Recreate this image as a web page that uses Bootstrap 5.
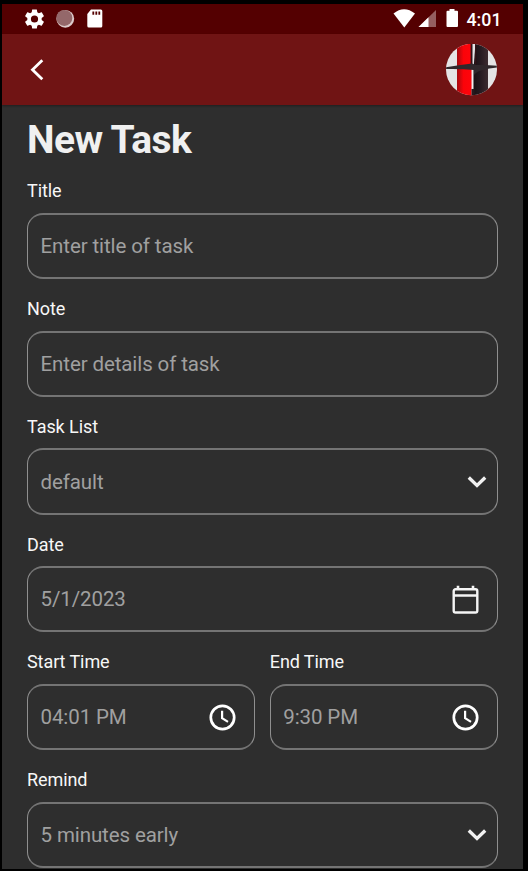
<!DOCTYPE html>
<html lang="en">
<head>
<meta charset="utf-8">
<meta name="viewport" content="width=device-width, initial-scale=1">
<title>New Task</title>
<link href="https://cdn.jsdelivr.net/npm/bootstrap@5.3.0/dist/css/bootstrap.min.css" rel="stylesheet">
<style>
html, body { height: 100%; }
body { background: #000; font-family: Roboto, sans-serif; color: #f2f2f2; padding: 4px 5px 2px 2px; overflow: hidden; }
svg { display: block; flex: none; }
.screen { background: #2e2e2e; }
.status { height: 30px; background: #540001; padding: 0 21.5px 0 23px; }
.clock { font-size: 17.8px; font-weight: 500; line-height: 30px; color: #fff; padding-top: 2px; margin-left: 5.5px; }
.topbar { height: 71px; background: #701414; padding: 0 26px 0 22px; box-shadow: 0 1px 2px rgba(0,0,0,.35); }
.content { padding: 12px 25.5px 0 25px; }
.heading { font-size: 39px; font-weight: 700; line-height: 46px; letter-spacing: -.6px; margin: 0 0 13.3px; color: #f0f0f0; }
.field { height: 117.75px; }
.caption { font-size: 18px; line-height: 24px; height: 32.5px; letter-spacing: -.08px; margin: 0; white-space: nowrap; padding-top: 3px; color: #f7f7f7; }
.control { height: 66.3px; border: 1px solid #8a8a8a; border-width: 2px 1px; border-color: #747474 #8f8f8f; border-radius: 16px; padding: 1px 0 0 12.5px; color: #a0a0a0; font-size: 20.5px; letter-spacing: -.1px; line-height: 1; margin-top: 4px; }
.pad-chev { padding-right: 9.5px; }
.pad-icon { padding-right: 17.5px; }
.times { gap: 15px; }
</style>
</head>
<body>
<div class="screen h-100 d-flex flex-column overflow-hidden">
  <div class="status d-flex align-items-center justify-content-between flex-shrink-0">
    <div class="d-flex align-items-center">
      <svg width="20" height="20" viewBox="2.500 2 20 20" fill="#fff"><path d="M19.14 12.94c.04-.3.06-.61.06-.94s-.02-.64-.07-.94l2.03-1.58c.18-.14.23-.41.12-.61l-1.92-3.32c-.12-.22-.37-.29-.59-.22l-2.39.96c-.5-.38-1.03-.7-1.62-.94l-.36-2.54c-.04-.24-.24-.41-.48-.41h-3.84c-.24 0-.43.17-.47.41l-.36 2.54c-.59.24-1.13.57-1.62.94l-2.39-.96c-.22-.08-.47 0-.59.22L2.74 8.87c-.12.21-.08.47.12.61l2.03 1.58c-.05.3-.09.63-.09.94s.02.64.07.94l-2.03 1.58c-.18.14-.23.41-.12.61l1.92 3.32c.12.22.37.29.59.22l2.39-.96c.5.38 1.03.7 1.62.94l.36 2.54c.05.24.24.41.48.41h3.84c.24 0 .44-.17.47-.41l.36-2.54c.59-.24 1.13-.56 1.62-.94l2.39.96c.22.08.47 0 .59-.22l1.92-3.32c.12-.22.07-.47-.12-.61l-2.01-1.58zM12 15.6A3.6 3.6 0 1 1 12 8.4a3.6 3.6 0 0 1 0 7.200z"/></svg>
      <svg class="ms-2" width="25" height="20" viewBox="0 0 25 20"><circle cx="12.300" cy="9.800" r="8.900" fill="#dccaca"/><circle cx="11.300" cy="8.900" r="8" fill="#94686a"/></svg>
      <svg width="25" height="20" viewBox="-1 0 25 20"><path d="M12 .500h9.800q1.500 0 1.500 1.500v15q0 1.500-1.500 1.500h-12q-1.500 0-1.500-1.500V5z" fill="#fff"/><path d="M14.300 2.500v3.300M17.300 2.500v3.300M20.300 2.500v3.300" stroke="#540001" stroke-width="1.800"/></svg>
    </div>
    <div class="d-flex align-items-center">
      <svg width="68" height="22" viewBox="0 0 68 22"><path d="M.5 5.500Q11-3 22 5.500L11.300 19.500z" fill="#fff"/><path d="M43 2v17H25.500z" fill="#955f60"/><path d="M35.500 9.300V19h-10z" fill="#fff"/><path d="M56.500 1h5v1.700h2.500q1 0 1 1V18q0 1-1 1H54.500q-1 0-1-1V3.700q0-1 1-1h2z" fill="#fff"/></svg>
      <span class="clock">4:01</span>
    </div>
  </div>
  <header class="topbar d-flex align-items-center justify-content-between flex-shrink-0">
    <svg width="26" height="26" viewBox="0 0 26 26" fill="none" stroke="#fff" stroke-width="2.800"><path d="M18.300 3.300L8.500 12.800l9.800 9.500"/></svg>
    <svg width="52" height="52" viewBox="0 0 52 52">
      <defs><clipPath id="round"><ellipse cx="26.500" cy="25.500" rx="25.500" ry="25.700"/></clipPath>
      <linearGradient id="red"><stop offset="0" stop-color="#a50a10"/><stop offset=".45" stop-color="#fb0309"/><stop offset="1" stop-color="#ff050b"/></linearGradient>
      <linearGradient id="dark"><stop offset="0" stop-color="#1b1014"/><stop offset=".45" stop-color="#251a20"/><stop offset="1" stop-color="#3c2b30"/></linearGradient></defs>
      <g clip-path="url(#round)"><g transform="translate(1 -1)"><path d="M-1 0h53v54H-1z" fill="#e5e4e5"/><path d="M11 0h14.500v53H11z" fill="url(#red)"/><path d="M29.500 0H42v53H27.500V26z" fill="url(#dark)"/><path d="M24.600 0h1.900v21h-1.900zM29 0h1.200v21H29z" fill="#321318"/><path d="M26.500 27v18" stroke="#f5eeee" stroke-width="1"/><path d="M25.500 46h3v7h-3z" fill="#281a1f"/><path d="M-1 24.500q13-2.500 27-4 3 1 5 1.500 10-.500 21 1v1.500q-9 1-15 2.500-6 1-9 5v-5Q14 25.500-1 26z" fill="#30282c"/></g></g>
    </svg>
  </header>
  <main class="content">
    <h1 class="heading">New Task</h1>
    <div class="field"><div class="caption">Title</div><div class="control d-flex align-items-center">Enter title of task</div></div>
    <div class="field"><div class="caption">Note</div><div class="control d-flex align-items-center">Enter details of task</div></div>
    <div class="field"><div class="caption">Task List</div><div class="control pad-chev d-flex align-items-center justify-content-between"><span>default</span><svg width="20" height="14" viewBox="0 0 20 14" fill="none" stroke="#f1f1f1" stroke-width="3.300"><path d="M1.800 2.500l8.200 8 8.200-8"/></svg></div></div>
    <div class="field"><div class="caption">Date</div><div class="control pad-icon d-flex align-items-center justify-content-between"><span>5/1/2023</span><svg width="27" height="30" viewBox="0 0 27 30"><rect x="1.700" y="4.200" width="23.600" height="23.300" rx="1.800" fill="none" stroke="#f5f5f5" stroke-width="2.400"/><path d="M2 10.500h23M6 .800v4M21 .800v4" fill="none" stroke="#f5f5f5" stroke-width="2.600"/></svg></div></div>
    <div class="d-flex times">
      <div class="field flex-fill w-50"><div class="caption">Start Time</div><div class="control pad-icon d-flex align-items-center justify-content-between"><span>04:01 PM</span><svg width="27" height="27" viewBox="0 0 27 27" fill="none" stroke="#fff"><circle cx="13.500" cy="13.500" r="11.700" stroke-width="2.700"/><path d="M13.100 6.800v7.400l5.900 3.700" stroke-width="2.200"/></svg></div></div>
      <div class="field flex-fill w-50"><div class="caption">End Time</div><div class="control pad-icon d-flex align-items-center justify-content-between"><span>9:30 PM</span><svg width="27" height="27" viewBox="0 0 27 27" fill="none" stroke="#fff"><circle cx="13.500" cy="13.500" r="11.700" stroke-width="2.700"/><path d="M13.100 6.800v7.400l5.900 3.700" stroke-width="2.200"/></svg></div></div>
    </div>
    <div class="field"><div class="caption">Remind</div><div class="control pad-chev d-flex align-items-center justify-content-between"><span>5 minutes early</span><svg width="20" height="14" viewBox="0 0 20 14" fill="none" stroke="#f1f1f1" stroke-width="3.300"><path d="M1.800 2.500l8.200 8 8.200-8"/></svg></div></div>
  </main>
</div>
<script src="https://cdn.jsdelivr.net/npm/bootstrap@5.3.0/dist/js/bootstrap.bundle.min.js"></script>
</body>
</html>
